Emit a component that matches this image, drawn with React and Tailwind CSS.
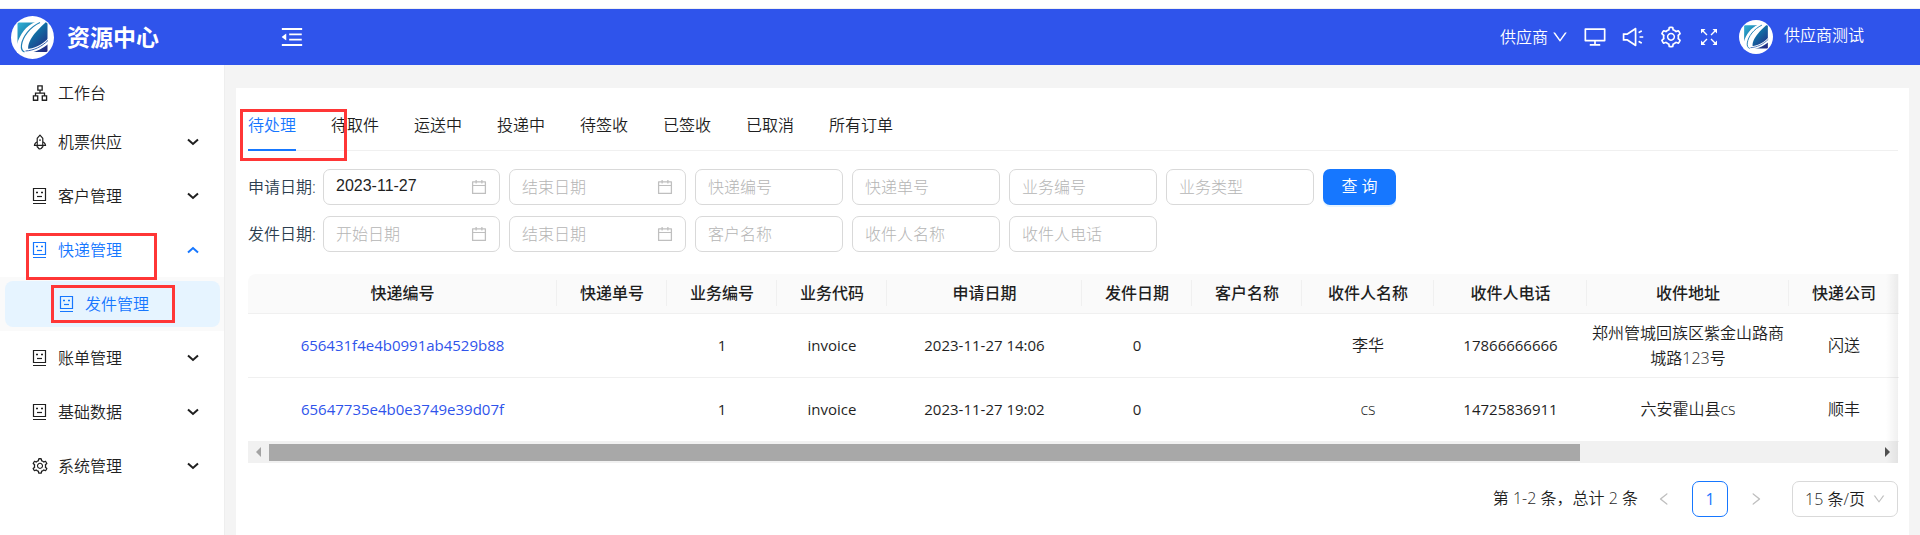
import {
  AiOutlineApartment,
  AiOutlineCalendar,
  AiOutlineDesktop,
  AiOutlineDown,
  AiOutlineLeft,
  AiOutlineMenuFold,
  AiOutlineRight,
  AiOutlineRocket,
  AiOutlineSetting,
  AiOutlineSound,
} from "react-icons/ai";

const tabs = ["待处理", "待取件", "运送中", "投递中", "待签收", "已签收", "已取消", "所有订单"];

const columns = [
  { key: "expressId", title: "快递编号", width: "w-[309px]" },
  { key: "expressNo", title: "快递单号", width: "w-[110px]" },
  { key: "bizNo", title: "业务编号", width: "w-[110px]" },
  { key: "bizCode", title: "业务代码", width: "w-[110px]" },
  { key: "applyDate", title: "申请日期", width: "w-[195px]" },
  { key: "sendDate", title: "发件日期", width: "w-[110px]" },
  { key: "customer", title: "客户名称", width: "w-[110px]" },
  { key: "receiver", title: "收件人名称", width: "w-[132px]", cjk: true },
  { key: "phone", title: "收件人电话", width: "w-[153px]" },
  { key: "address", title: "收件地址", width: "w-[202px]", cjk: true },
  { key: "company", title: "快递公司", width: "w-[110px]", cjk: true },
];

const orders = [
  {
    expressId: "656431f4e4b0991ab4529b88",
    bizNo: "1",
    bizCode: "invoice",
    applyDate: "2023-11-27 14:06",
    sendDate: "0",
    receiver: "李华",
    phone: "17866666666",
    address: "郑州管城回族区紫金山路商城路123号",
    company: "闪送",
  },
  {
    expressId: "65647735e4b0e3749e39d07f",
    bizNo: "1",
    bizCode: "invoice",
    applyDate: "2023-11-27 19:02",
    sendDate: "0",
    receiver: "cs",
    phone: "14725836911",
    address: "六安霍山县cs",
    company: "顺丰",
  },
];

function Logo({ className, id }) {
  return (
    <svg viewBox="0 0 43 43" className={className} aria-hidden="true">
      <defs>
        <linearGradient id={id} x1="0" y1="0" x2="1" y2="1">
          <stop offset="0" stopColor="#35b3d6" />
          <stop offset="0.45" stopColor="#1173a6" />
          <stop offset="1" stopColor="#26237f" />
        </linearGradient>
      </defs>
      <circle cx="21.5" cy="21.5" r="21.5" fill="#fff" />
      <rect x="6.500" y="6.500" width="30" height="29.500" rx="1.500" fill={`url(#${id})`} />
      <path d="M24 6 C15 10 9 18 6 28 V37 H19 C15 32 17 22 34 7 V6 Z" fill="#fff" />
      <path d="M29 6.500 C19 11 11.500 21 10.500 29 C10 32.500 11 35 13.500 36" fill="none" stroke="#1f7fb4" strokeWidth="1.200" />
      <path d="M15 33 C23 33 31 29 38 21.500 V27.500 C32 32 26 35.500 19 37 H14 Z" fill="#fff" />
      <path d="M14.500 35 C23 34.500 31 30.500 37 24.500" fill="none" stroke="#2f5fae" strokeWidth="1" />
    </svg>
  );
}

function FaceIcon() {
  return (
    <svg viewBox="0 0 18 18" className="h-[18px] w-[18px] shrink-0" fill="none" stroke="currentColor" aria-hidden="true">
      <path d="M2.500 1.500h12v12h-12zM2 16.500h13" strokeWidth="1.200" />
      <path d="M5 5.500h2M10 5.500h2" strokeWidth="1.600" />
      <path d="M6 9.500h5" strokeWidth="1.200" />
    </svg>
  );
}

function FullscreenIcon() {
  return (
    <svg viewBox="0 0 16 16" className="h-4 w-4" fill="none" stroke="currentColor" strokeWidth="1.4" aria-hidden="true">
      <path d="M2 2l4 4M14 2l-4 4M2 14l4-4M14 14l-4-4" />
      <path d="M0 0h4.500l-4.500 4.500zM16 0h-4.500l4.500 4.500zM0 16h4.500l-4.500-4.500zM16 16h-4.500l4.500-4.500z" fill="currentColor" stroke="none" />
    </svg>
  );
}

function Arrow({ up }) {
  return (
    <svg viewBox="0 0 12 8" className="ml-auto h-2 w-3" fill="none" stroke="currentColor" strokeWidth="2" aria-hidden="true">
      <path d={up ? "M1 6.500l5-4.500 5 4.500" : "M1 1.500l5 4.500 5-4.500"} />
    </svg>
  );
}

function MenuGroup({ icon, label, open, children }) {
  return (
    <li className="relative">
      <button
        type="button"
        aria-expanded={!!open}
        className={`flex h-[54px] w-full items-center pr-[25px] pl-[31px] ${open ? "text-[#1677ff]" : "text-[#1f1f1f]"}`}
      >
        {icon}
        <span className="ml-[9px]">{label}</span>
        <Arrow up={open} />
      </button>
      {children}
    </li>
  );
}

function Sidebar() {
  return (
    <nav className="w-[225px] shrink-0 border-r border-[#eeeeee] bg-white">
      <ul>
        <li className="h-[50px] pt-1.5">
          <a href="#workbench" className="flex h-11 items-center pl-[31px] text-[#1f1f1f]">
            <AiOutlineApartment className="h-[18px] w-[18px]" />
            <span className="ml-[9px]">工作台</span>
          </a>
        </li>
        <MenuGroup icon={<AiOutlineRocket className="h-[18px] w-[18px]" />} label="机票供应" />
        <MenuGroup icon={<FaceIcon />} label="客户管理" />
        <MenuGroup icon={<FaceIcon />} label="快递管理" open>
          <span className="pointer-events-none absolute top-[10px] left-[26px] z-10 h-[47px] w-[131px] border-3 border-[#ff3636]" />
          <ul className="bg-[#fafafa] py-1 pr-1 pl-[5px]">
            <li className="relative">
              <a
                href="#send"
                className="flex h-[46px] items-center rounded-lg bg-[#e6f4ff] pl-[53px] text-[#1677ff]"
              >
                <FaceIcon />
                <span className="ml-[9px]">发件管理</span>
              </a>
              <span className="pointer-events-none absolute top-1 left-[46px] h-[38px] w-[124px] border-3 border-[#ff3636]" />
            </li>
          </ul>
        </MenuGroup>
        <MenuGroup icon={<FaceIcon />} label="账单管理" />
        <MenuGroup icon={<FaceIcon />} label="基础数据" />
        <MenuGroup icon={<AiOutlineSetting className="h-[18px] w-[18px]" />} label="系统管理" />
      </ul>
    </nav>
  );
}

function DateField({ id, label, value }) {
  return (
    <div className="flex h-9 w-[177px] items-center rounded-[7px] border border-[#d9d9d9] bg-white pr-[11px] pl-3">
      <input
        id={id}
        type="text"
        aria-label={label}
        placeholder={label}
        defaultValue={value}
        className={`w-full min-w-0 font-light text-[#1f1f1f] outline-none placeholder:text-[#b5b5b5] ${value ? "pb-0.5 font-['Liberation_Sans',sans-serif]" : ""}`}
      />
      <AiOutlineCalendar className="h-[18px] w-[18px] shrink-0 text-[#bfbfbf]" />
    </div>
  );
}

function TextField({ label }) {
  return (
    <input
      type="text"
      aria-label={label}
      placeholder={label}
      className="h-9 w-[148px] rounded-[7px] border border-[#d9d9d9] bg-white px-3 font-light outline-none placeholder:text-[#b5b5b5]"
    />
  );
}

function Filters() {
  return (
    <form className="mt-[18px] flex flex-col gap-[11px]" onSubmit={(e) => e.preventDefault()}>
      <div className="flex flex-wrap items-center gap-[9px]">
        <label htmlFor="apply-start" className="w-[66px] whitespace-nowrap text-[#2c3e50]">申请日期:</label>
        <DateField id="apply-start" label="开始日期" value="2023-11-27" />
        <DateField id="apply-end" label="结束日期" />
        <TextField label="快递编号" />
        <TextField label="快递单号" />
        <TextField label="业务编号" />
        <TextField label="业务类型" />
        <button
          type="submit"
          className="h-9 w-[73px] rounded-[7px] bg-[#1677ff] pb-0.5 text-white shadow-[0_2px_0_rgba(5,145,255,0.1)]"
        >
          查 询
        </button>
      </div>
      <div className="flex flex-wrap items-center gap-[9px]">
        <label htmlFor="send-start" className="w-[66px] whitespace-nowrap text-[#2c3e50]">发件日期:</label>
        <DateField id="send-start" label="开始日期" />
        <DateField id="send-end" label="结束日期" />
        <TextField label="客户名称" />
        <TextField label="收件人名称" />
        <TextField label="收件人电话" />
      </div>
    </form>
  );
}

function OrderTable() {
  return (
    <div className="relative mt-[22px]">
      <table className="w-full table-fixed border-separate border-spacing-0 text-center">
        <thead>
          <tr>
            {columns.map((c, i) => (
              <th
                key={c.key}
                className={`relative h-10 border-b border-[#f0f0f0] bg-[#fafafa] p-0 pb-0.5 font-medium whitespace-nowrap text-[#1f1f1f] first:rounded-tl-lg ${c.width}`}
              >
                {c.title}
                {i < columns.length - 1 && <span className="absolute top-1.5 right-0 h-[26px] w-px bg-[#f0f0f0]" />}
              </th>
            ))}
          </tr>
        </thead>
        <tbody>
          {orders.map((o) => (
            <tr key={o.expressId}>
              {columns.map((c) => (
                <td
                  key={c.key}
                  className={`h-16 border-b border-[#f0f0f0] px-1 py-0 text-[#1f1f1f] ${c.cjk ? "text-base leading-[25px]" : "text-[15px] leading-[25px] font-normal"}`}
                >
                  {c.key === "expressId" ? (
                    <a href={`#${o.expressId}`} className="text-[#2f54eb]">{o.expressId}</a>
                  ) : (
                    o[c.key]
                  )}
                </td>
              ))}
            </tr>
          ))}
        </tbody>
      </table>

      {/* horizontal scroll track */}
      <div className="relative -mt-px flex h-[22px] items-center bg-[#f1f1f1]">
        <span className="flex w-[21px] justify-center">
          <span className="border-y-5 border-r-5 border-y-transparent border-r-[#a3a3a3]" />
        </span>
        <div className="flex-1">
          <div className="h-[17px] w-[81.5%] bg-[#a8a8a8]" />
        </div>
        <span className="flex w-[21px] justify-center">
          <span className="border-y-5 border-l-5 border-y-transparent border-l-[#505050]" />
        </span>
      </div>
      <span className="pointer-events-none absolute inset-y-0 right-0 w-3 bg-linear-to-l from-black/6 to-transparent" />
    </div>
  );
}

function Pagination() {
  return (
    <div className="mt-[18px] flex items-center justify-end text-[#1f1f1f]">
      <span className="mr-[18px] pb-0.5">第 1-2 条，总计 2 条</span>
      <button type="button" aria-label="上一页" className="flex h-9 w-4 items-center justify-center text-[#bfbfbf]">
        <AiOutlineLeft className="h-4 w-4" />
      </button>
      <button type="button" className="mx-5 h-9 w-9 rounded-[7px] border border-[#1677ff] font-normal text-[#1677ff]">
        1
      </button>
      <button type="button" aria-label="下一页" className="flex h-9 w-4 items-center justify-center text-[#bfbfbf]">
        <AiOutlineRight className="h-4 w-4" />
      </button>
      <div className="relative ml-7">
        <select
          aria-label="每页条数"
          className="h-9 w-[106px] appearance-none rounded-[7px] border border-[#d9d9d9] bg-white pl-3 outline-none"
        >
          <option>15 条/页</option>
          <option>30 条/页</option>
        </select>
        <AiOutlineDown className="pointer-events-none absolute top-[11px] right-3 h-3.5 w-3.5 text-[#bfbfbf]" />
      </div>
    </div>
  );
}

function Header() {
  return (
    <header className="flex h-14 items-center bg-[#2f54eb] pr-14 pl-[11px] text-white">
      <Logo id="logo" className="h-[43px] w-[43px]" />
      <h1 className="ml-[13px] text-[23px] font-bold">资源中心</h1>
      <button type="button" aria-label="收起菜单" className="ml-[120px]">
        <AiOutlineMenuFold className="h-[26px] w-[26px]" />
      </button>
      <div className="ml-auto flex items-center">
        <button type="button" className="flex items-center gap-[3px]">
          供应商
          <AiOutlineDown className="h-[18px] w-[18px]" />
        </button>
        <div className="ml-3.5 flex items-center gap-3.5">
          <button type="button" aria-label="桌面"><AiOutlineDesktop className="h-6 w-6" /></button>
          <button type="button" aria-label="通知"><AiOutlineSound className="h-6 w-6" /></button>
          <button type="button" aria-label="设置"><AiOutlineSetting className="h-6 w-6" /></button>
          <button type="button" aria-label="全屏" className="flex w-6 justify-center"><FullscreenIcon /></button>
        </div>
        <Logo id="avatar" className="ml-[18px] h-[34px] w-[34px]" />
        <span className="ml-[11px] pb-1">供应商测试</span>
      </div>
    </header>
  );
}

export default function App() {
  return (
    <div className="flex min-h-screen flex-col bg-white pt-2 font-['Open_Sans','Noto_Sans_CJK_SC',sans-serif] text-base font-[350]">
      <div className="h-px bg-[#f0f0f0]" />
      <Header />
      <div className="flex flex-1">
        <Sidebar />
        <main className="flex min-w-0 flex-1 flex-col bg-[#f4f4f4] px-[11px] pt-[23px]">
          <div className="flex-1 bg-white pt-3 pr-[11px] pl-3">
            <div role="tablist" className="relative flex gap-[35px] border-b border-[#f0f0f0]">
              {tabs.map((t, i) => (
                <button
                  key={t}
                  type="button"
                  role="tab"
                  aria-selected={i === 0}
                  className={`relative h-[50px] ${i === 0 ? "text-[#1677ff]" : "text-[#1f1f1f]"}`}
                >
                  {t}
                  {i === 0 && <span className="absolute inset-x-0 -bottom-px h-0.5 bg-[#1677ff]" />}
                </button>
              ))}
              <span className="pointer-events-none absolute top-[9px] -left-2 h-[52px] w-[107px] border-3 border-[#ff3636]" />
            </div>
            <Filters />
            <OrderTable />
            <Pagination />
          </div>
        </main>
      </div>
    </div>
  );
}
